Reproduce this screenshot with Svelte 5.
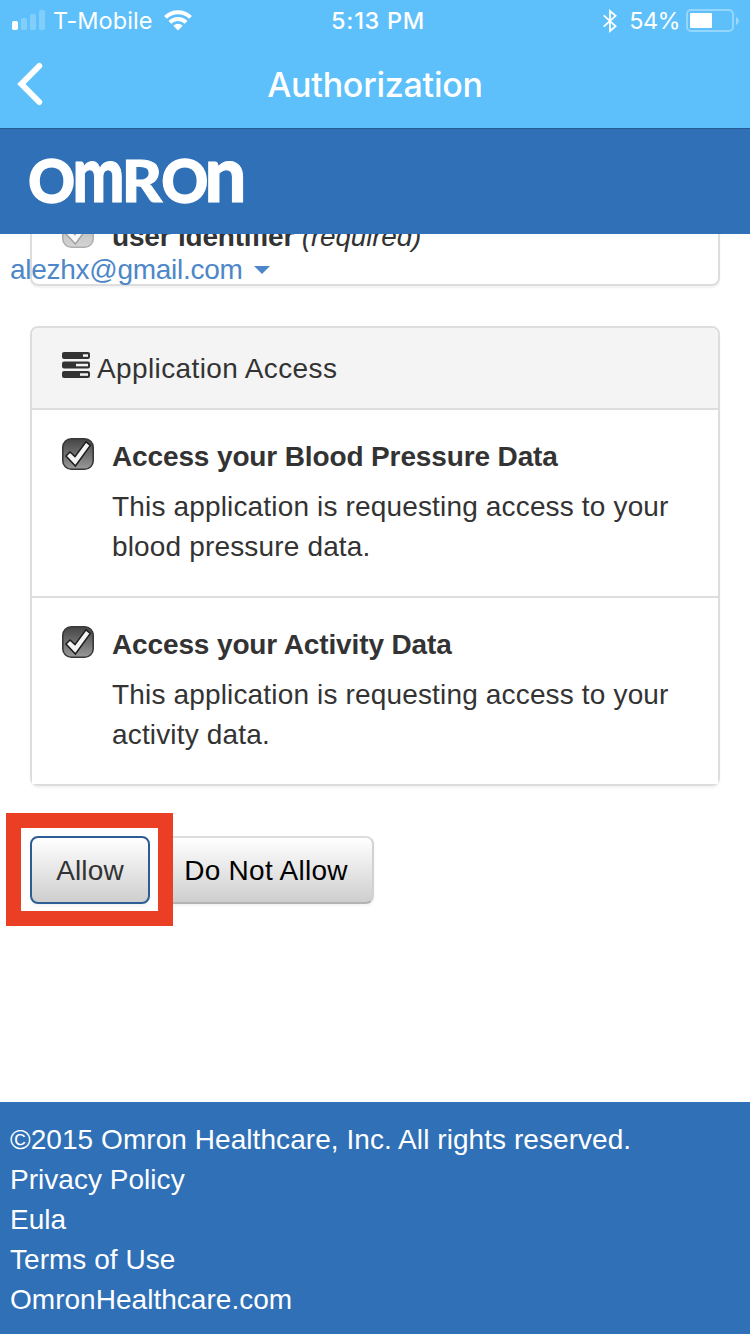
<script>
  const permissions = [
    {
      title: 'Access your Blood Pressure Data',
      text: ['This application is requesting access to your', 'blood pressure data.']
    },
    {
      title: 'Access your Activity Data',
      text: ['This application is requesting access to your', 'activity data.']
    }
  ];
  const links = ['Privacy Policy', 'Eula', 'Terms of Use', 'OmronHealthcare.com'];
</script>

{#snippet checkbox()}
  <svg class="check" width="32" height="32" viewBox="0 0 32 32">
    <defs>
      <linearGradient id="box" x1="0" y1="0" x2="0" y2="1">
        <stop offset="0" stop-color="#444" />
        <stop offset="1" stop-color="#999" />
      </linearGradient>
    </defs>
    <rect x=".8" y=".8" width="30.4" height="30.4" rx="8.5" fill="url(#box)" stroke="#383838" stroke-width="1.6" />
    <path d="M4 18 8 14 13 18.6 24 3.8 28.3 7.4 13.4 28Z" fill="#f4f4f4" stroke="#1c1c1c" stroke-width="1.5" />
  </svg>
{/snippet}

<div class="screen">
  <div class="top">
    <div class="status">
      <div class="side">
        <svg class="signal" width="34" height="20" viewBox="0 0 34 20" fill="#fff">
          <rect x="0" y="11" width="6" height="9" rx="1.8" />
          <g opacity=".22">
            <rect x="9" y="8" width="6" height="12" rx="1.8" />
            <rect x="18" y="4" width="6" height="16" rx="1.8" />
            <rect x="27" y="0" width="6" height="20" rx="1.8" />
          </g>
        </svg>
        <span class="carrier">T-Mobile</span>
        <svg class="wifi" width="28" height="21" viewBox="0 0 28 21">
          <g fill="none" stroke="#fff" stroke-width="4">
            <path d="M1.5 7.4A17.6 17.6 0 0 1 26.5 7.4" />
            <path d="M5.9 12.3A11.4 11.4 0 0 1 22.1 12.3" />
          </g>
          <path d="M9.3 15.8A6.6 6.6 0 0 1 18.7 15.8L14 20.6Z" fill="#fff" />
        </svg>
      </div>
      <span class="time">5:13 PM</span>
      <div class="side right">
        <svg class="bt" width="14" height="24" viewBox="0 0 14 24" fill="none" stroke="#fff" stroke-width="1.8">
          <path d="M.7 6.4 12.6 17.2 7 22V2L12.6 6.8.7 17.6" />
        </svg>
        <span class="percent">54%</span>
        <svg width="54" height="24" viewBox="0 0 54 24">
          <rect x="1" y="1" width="46" height="21" rx="4" fill="none" stroke="#fff" stroke-opacity=".35" stroke-width="2" />
          <rect x="4" y="4" width="22" height="15" rx="1" fill="#fff" />
          <path d="M50 8C53.6 9.5 53.6 14 50 16Z" fill="#fff" opacity=".4" />
        </svg>
      </div>
    </div>
    <div class="nav">
      <svg class="back" width="26" height="44" viewBox="0 0 26 44">
        <path d="M22.2 4 4.4 22 22.2 40" fill="none" stroke="#fff" stroke-width="6" stroke-linecap="round" stroke-linejoin="miter" />
      </svg>
      <h1>Authorization</h1>
    </div>
  </div>

  <header>
    <svg width="216" height="48" viewBox="0 0 216 48" fill="#fff" stroke="#fff" class="logo">
      <text transform="translate(-.7 44.8) scale(.96 1)" font-size="60" stroke-width="1.6">O</text>
      <text transform="translate(43.4 43.7) scale(.79 1)" font-size="78" stroke-width="1">m</text>
      <text transform="translate(92.8 43.7) scale(1.07 1)" font-size="58" stroke-width="1">R</text>
      <text transform="translate(132.6 44.8) scale(.96 1)" font-size="60" stroke-width="1.6">O</text>
      <text transform="translate(175.6 43.7) scale(.95 1)" font-size="78" stroke-width="1">n</text>
    </svg>
  </header>

  <main>
    <section class="panel first">
      <div class="identity">
        <div class="faded">{@render checkbox()}</div>
        <p class="ident"><b>user identifier</b> <i>(required)</i></p>
      </div>
    </section>
    <a class="account" href="#account"><span>alezhx@gmail.com</span>
      <svg width="16" height="8" viewBox="0 0 16 8"><path d="M0 0H16L8 8Z" fill="#4d87c7" /></svg>
    </a>

    <section class="panel access">
      <div class="heading">
        <svg width="28" height="26" viewBox="0 0 28 26" fill="#333">
          <rect x="0" y="0" width="28" height="7" rx="2" />
          <rect x="0" y="9.5" width="28" height="7" rx="2" />
          <rect x="0" y="19" width="28" height="7" rx="2" />
          <g fill="#f4f4f4">
            <rect x="21" y="2.3" width="5" height="2.5" />
            <rect x="14" y="11.8" width="12" height="2.5" />
            <rect x="18" y="21.3" width="8" height="2.5" />
          </g>
        </svg>
        <span>Application Access</span>
      </div>
      {#each permissions as p}
        <div class="row">
          {@render checkbox()}
          <div>
            <h2>{p.title}</h2>
            <p class="desc">{p.text[0]}<br />{p.text[1]}</p>
          </div>
        </div>
      {/each}
    </section>

    <div class="actions">
      <button class="allow">Allow</button>
      <button class="deny">Do Not Allow</button>
      <div class="highlight"></div>
    </div>
  </main>

  <footer>
    <p class="copy">©2015 Omron Healthcare, Inc. All rights reserved.</p>
    {#each links as l}<p>{l}</p>{/each}
  </footer>
</div>

<style>
  :global(body) { margin: 0; background: #fff; }
  .screen {
    width: 750px; height: 1334px; overflow: hidden;
    display: flex; flex-direction: column;
    font: 28px/40px "Liberation Sans", Arial, sans-serif;
    letter-spacing: 0.16px; color: #333; background: #fff;
  }
  svg { display: block; flex: none; }
  p, h1, h2 { margin: 0; }

  .top { height: 128px; background: #5dc0fb; border-bottom: 1px solid #285a93; color: #fff; font-family: Inter, sans-serif; }
  .status { height: 40px; display: grid; grid-template-columns: 1fr auto 1fr; align-items: center; padding: 1px 10px 0 12px; box-sizing: border-box; font-size: 23.5px; line-height: 39px; }
  .side { display: flex; align-items: center; }
  .side.right { justify-content: flex-end; }
  .signal { margin-bottom: 2px; }
  .carrier { margin-left: 7px; letter-spacing: 0.05px; }
  .wifi { margin-left: 12px; margin-bottom: 1px; }
  .time { font-weight: 500; letter-spacing: 0.7px; margin-left: 4px; }
  .bt { margin-right: 12px; }
  .percent { margin-right: 6px; letter-spacing: -0.6px; }
  .nav { height: 88px; display: grid; grid-template-columns: 60px 1fr 60px; align-items: center; }
  .back { margin-left: 17px; }
  h1 { font-size: 34px; line-height: 44px; font-weight: 500; text-align: center; letter-spacing: -0.25px; padding-top: 1px; }

  header { height: 105px; flex: none; background: #2f70b7; padding-left: 29px; display: flex; align-items: center; box-sizing: border-box; }
  .logo { font-family: Lato, sans-serif; font-weight: 900; letter-spacing: 0; overflow: visible; }

  main { position: relative; height: 868px; flex: none; overflow: hidden; }
  .panel { margin: 0 30px; border: 2px solid #ddd; border-radius: 8px; box-shadow: 0 2px 2px rgba(0, 0, 0, .05); box-sizing: border-box; }
  .first { margin-top: -40px; height: 92px; padding: 20px 30px 0; }
  .identity { display: flex; gap: 18px; }
  .faded { opacity: .4; }
  .ident { letter-spacing: -0.2px; margin-top: 1px; }
  .account { position: absolute; left: 10px; top: 16px; display: flex; align-items: center; gap: 12px; color: #4d87c7; text-decoration: none; letter-spacing: -0.28px; }

  .access { margin-top: 40px; height: 460px; }
  .heading { height: 80px; background: #f4f4f4; border-radius: 6px 6px 0 0; display: flex; align-items: center; gap: 7px; padding-left: 30px; }
  .heading svg { margin-bottom: 7px; }
  .heading span { padding-top: 1px; letter-spacing: 0.38px; }
  .row { height: 158px; border-top: 2px solid #ddd; display: flex; gap: 18px; padding: 28px 30px 0; background: #fff; }
  .row h2 { font-size: 28px; line-height: 40px; margin-top: -1px; letter-spacing: -0.13px; }
  .desc { margin-top: 10px; white-space: nowrap; }

  .actions { position: relative; margin: 50px 30px 0; display: flex; gap: 8px; }
  button { height: 68px; padding: 2px 0 0; border: 2px solid; border-color: #ddd #d2d2d2 #b3b3b3; border-radius: 8px; background: linear-gradient(#fff, #cecece); font: inherit; letter-spacing: inherit; color: #000; box-shadow: 0 2px 3px rgba(0, 0, 0, .05); }
  .allow { width: 120px; color: #333; border-color: #2e5c94; }
  .deny { width: 216px; letter-spacing: 0.28px; }
  .highlight { position: absolute; left: -24px; top: -23px; width: 137px; height: 83px; border: 15px solid #eb3f25; }

  footer { flex: 1; background: #2f70b7; color: #fff; padding: 18px 10px 0; letter-spacing: 0.03px; }
  .copy { letter-spacing: 0.06px; }
</style>
